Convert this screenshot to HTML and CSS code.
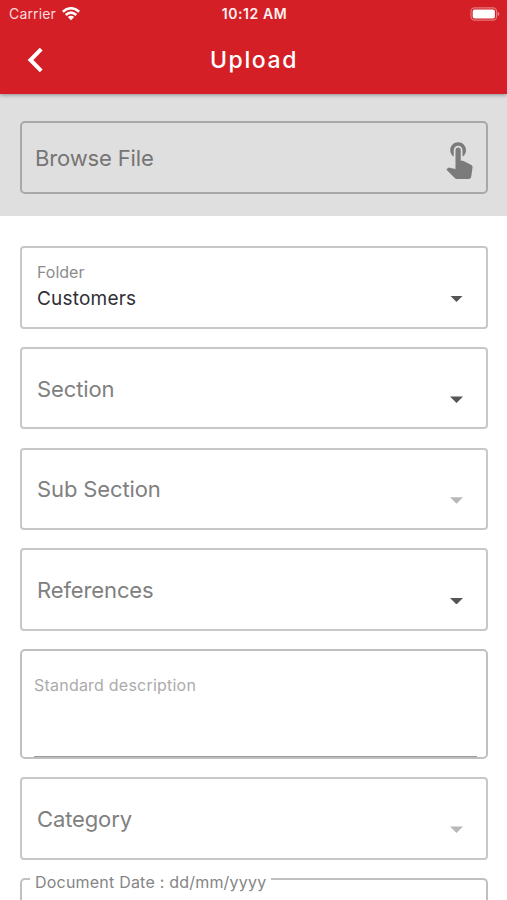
FILE: index.html
```
<!DOCTYPE html>
<html lang="en">
<head>
<meta charset="utf-8">
<title>Upload</title>
<link rel="stylesheet" href="styles.css">
</head>
<body>
<header class="top">
  <div class="status">
    <div class="carrier"><span>Carrier</span>
      <svg class="wifi" width="18" height="14" viewBox="0 0 18 14" fill="none" stroke="#fff" stroke-width="2.5"><path d="M.8 4.7Q9-2.2 17.2 4.7M3.7 8Q9 3.3 14.3 8"/><path d="M5.8 10Q9 7.3 12.2 10L9 13.3Z" fill="#fff" stroke="none"/></svg>
    </div>
    <span class="time">10:12 AM</span>
    <svg class="battery" width="30" height="14" viewBox="0 0 30 14"><rect x="1" y=".8" width="25.6" height="12.4" rx="3.6" fill="none" stroke="#fff" stroke-opacity=".4" stroke-width="1.2"/><rect x="2.7" y="2.4" width="22.2" height="9.2" rx="2" fill="#fff"/><path d="M27.8 4.8Q30.8 7 27.8 9.2Z" fill="#fff" fill-opacity=".5"/></svg>
  </div>
  <nav class="bar">
    <svg class="back" width="18" height="26" viewBox="0 0 18 26" fill="none" stroke="#fff" stroke-width="4"><path d="M15.2 2.2 4.5 13l10.7 10.8"/></svg>
    <h1 class="title">Upload</h1>
  </nav>
</header>
<section class="browse">
  <div class="file">
    <span class="label">Browse File</span>
    <svg class="touch" width="42" height="42" viewBox="0 0 24 24" fill="#7b7b7b"><path d="M9 11.24V7.5C9 6.12 10.12 5 11.5 5S14 6.12 14 7.5v3.74c1.21-.81 2-2.18 2-3.74C16 5.01 13.99 3 11.5 3S7 5.01 7 7.5c0 1.56.79 2.93 2 3.74zm9.84 4.63l-4.54-2.26c-.17-.07-.35-.11-.54-.11H13v-6c0-.83-.67-1.5-1.5-1.5S10 6.67 10 7.5v10.74l-3.43-.72c-.08-.01-.15-.03-.24-.03-.31 0-.59.13-.79.33l-.79.8 4.94 4.94c.27.27.65.44 1.06.44h6.79c.75 0 1.33-.55 1.44-1.28l.75-5.27c.01-.07.02-.14.02-.2 0-.62-.38-1.16-.91-1.38z"/></svg>
  </div>
</section>
<main class="form">
  <div class="select filled"><div class="text"><span class="caption">Folder</span><span class="value">Customers</span></div><i class="arrow"></i></div>
  <div class="select"><span class="label">Section</span><i class="arrow"></i></div>
  <div class="select"><span class="label">Sub Section</span><i class="arrow off"></i></div>
  <div class="select"><span class="label">References</span><i class="arrow"></i></div>
  <div class="description"><span class="hint">Standard description</span></div>
  <div class="select"><span class="label">Category</span><i class="arrow off"></i></div>
  <fieldset class="date"><legend>Document Date : dd/mm/yyyy</legend></fieldset>
</main>
</body>
</html>
```
FILE: styles.css
```
* { box-sizing: border-box; }
body { margin: 0; height: 900px; overflow: hidden; background: #fff; font-family: Inter, "Liberation Sans", sans-serif; color: #808080; }
svg { display: block; }
.top { position: relative; height: 94px; background: #d41f27; color: #fff; box-shadow: 0 1px 4px rgba(0,0,0,.38); }
.status { display: grid; grid-template-columns: 1fr auto 1fr; align-items: center; height: 27px; padding: 0 7px 0 9px; }
.carrier { display: flex; align-items: center; gap: 6px; font-size: 14px; letter-spacing: .15px; color: #fbdcdd; }
.time { font-size: 14px; font-weight: 600; letter-spacing: .55px; color: #fff0f0; }
.battery { justify-self: end; }
.bar { display: grid; grid-template-columns: 60px 1fr 60px; align-items: center; height: 65px; }
.back { margin-left: 26px; }
.title { margin: 0 0 0 1px; text-align: center; font-size: 23px; font-weight: 500; letter-spacing: 1.6px; }
.browse { height: 122px; padding: 27px 19px 0 20px; background: #dfdfdf; }
.file { display: flex; align-items: center; justify-content: space-between; height: 73px; padding: 0 6px 0 13px; border: 2px solid #a8a8a8; border-radius: 5px; }
.file .label { letter-spacing: -.15px; color: #757575; }
.label { margin-top: 1px; font-size: 22px; line-height: 28px; letter-spacing: -.12px; }
.form { display: flex; flex-direction: column; gap: 18.1px; height: 684px; padding: 30px 19px 0 20px; overflow: hidden; }
.select { display: flex; flex: none; align-items: center; justify-content: space-between; height: 82.7px; padding: 0 23px 0 15px; border: 2px solid #c8c8c8; border-radius: 4px; }
.text { display: flex; flex-direction: column; margin-top: 0; }
.caption { font-size: 16px; line-height: 20px; color: #8c8c8c; }
.value { margin-top: 4px; font-size: 19px; line-height: 26px; letter-spacing: .2px; color: #303036; }
.arrow { width: 13px; height: 6.5px; margin-top: 23px; background: #555; clip-path: polygon(0 0, 100% 0, 50% 100%); }
.off { background: #b8b8b8; }
.description { display: flex; flex: none; height: 109.6px; padding: 23px 9px 0 12px; border: 2px solid #c0c0c0; border-radius: 5px; background: linear-gradient(#999, #999) 12px 100% / 443px 1px no-repeat; }
.hint { font-size: 16px; line-height: 22px; letter-spacing: .22px; color: #ababab; }
.date { flex: 1; min-height: 0; margin: -9px 0 0; padding: 0 9px 0 8px; border: 2px solid #c0c0c0; border-bottom: 0; border-radius: 5px 5px 0 0; }
.date legend { position: relative; top: 3px; padding: 0 5px; font-size: 16px; line-height: 20px; letter-spacing: .21px; color: #858585; }
```
